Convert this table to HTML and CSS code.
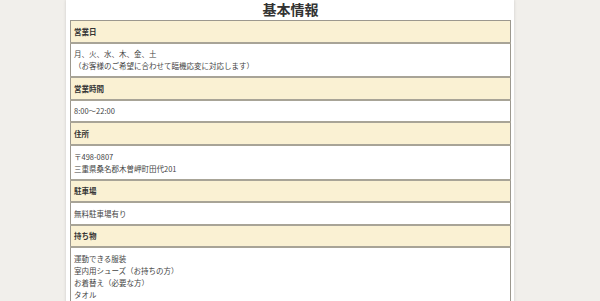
FILE: index.html
```html
<!DOCTYPE html>
<html lang="ja">
<head>
    <meta charset="UTF-8">
    <meta name="viewport" content="width=device-width, initial-scale=1.0">
    <link rel="stylesheet" href="styles.css">
    <title>基本情報</title>
</head>
<body>
    <div class="page">
        <h2 class="title">基本情報</h2>
        <table class="info-table">
            <tr class="head"><th>営業日</th></tr>
            <tr><td>月、火、水、木、金、土<br>（お客様のご希望に合わせて臨機応変に対応します）</td></tr>
            <tr class="head"><th>営業時間</th></tr>
            <tr><td>8:00～22:00</td></tr>
            <tr class="head"><th>住所</th></tr>
            <tr><td>〒498-0807<br>三重県桑名郡木曽岬町田代201</td></tr>
            <tr class="head"><th>駐車場</th></tr>
            <tr><td>無料駐車場有り</td></tr>
            <tr class="head"><th>持ち物</th></tr>
            <tr><td>運動できる服装<br>室内用シューズ（お持ちの方）<br>お着替え（必要な方）<br>タオル</td></tr>
        </table>
    </div>
</body>
</html>
```

FILE: styles.css
```css
body {
    margin: 0;
    background: #f1efeb;
    font-family: "Noto Sans CJK JP", "Noto Sans", sans-serif;
    color: #444;
}

.page {
    width: 448px;
    margin-left: 66px;
    background: #fff;
    box-shadow: 0 0 3px rgba(0, 0, 0, 0.15);
    padding: 0 3px 0 4px;
    box-sizing: border-box;
    min-height: 320px;
}

.title {
    margin: 0;
    height: 20px;
    line-height: 18px;
    font-size: 14px;
    font-weight: bold;
    color: #333;
    text-align: center;
}

.info-table {
    width: 100%;
    border-collapse: collapse;
    border: 1px solid #9c988e;
}

.info-table th,
.info-table td {
    border-top: 2px solid #a8a497;
    text-align: left;
    font-size: 7.5px;
    line-height: 12px;
    padding: 4.6px 3px 4px;
}

.info-table tr:first-child th {
    border-top: 1px solid #9c988e;
}

.info-table th {
    background: #faf1d3;
    color: #333;
    font-weight: bold;
}
```
